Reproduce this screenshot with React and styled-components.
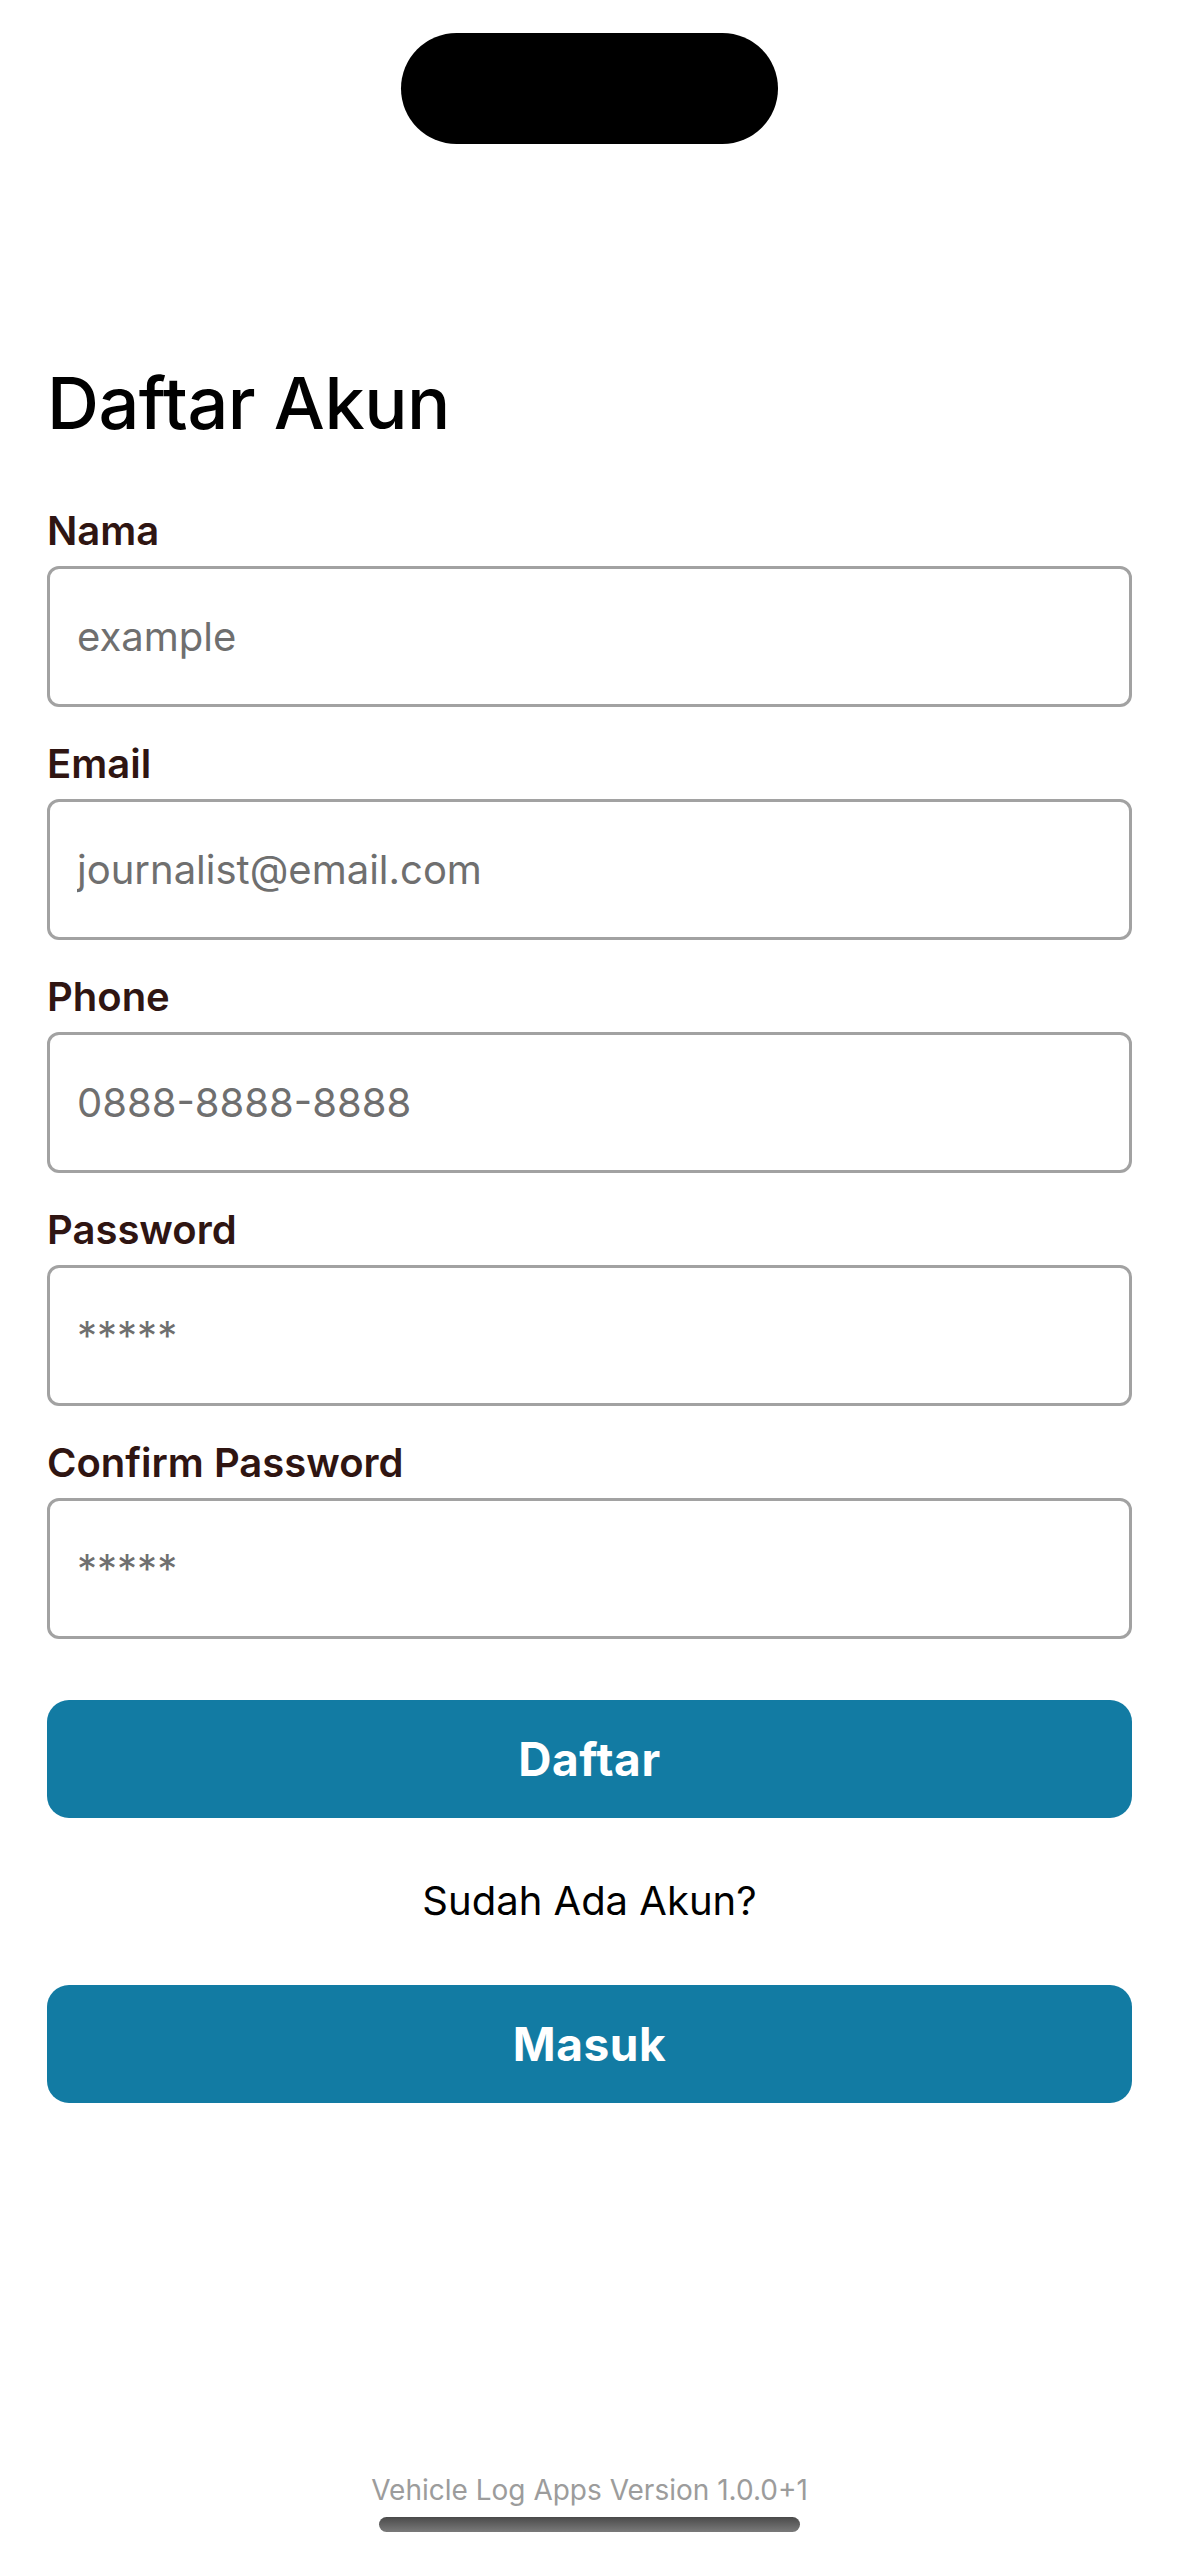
import React from 'react';
import styled, { createGlobalStyle } from 'styled-components';

const GlobalStyle = createGlobalStyle`
  html, body {
    margin: 0;
    padding: 0;
    background: #ffffff;
  }

  body {
    font-family: 'Inter', 'Liberation Sans', sans-serif;
  }

  * {
    box-sizing: border-box;
  }
`;

const Screen = styled.div`
  display: flex;
  flex-direction: column;
  min-height: 2556px;
  background: #ffffff;
`;

const StatusBar = styled.div`
  display: flex;
  justify-content: center;
  padding-top: 33px;
`;

const Notch = styled.div`
  width: 377px;
  height: 111px;
  border-radius: 56px;
  background: #000000;
`;

const Content = styled.div`
  display: flex;
  flex-direction: column;
  padding: 0 47px;
`;

const Title = styled.h1`
  margin: 215px 0 0;
  font-size: 72px;
  line-height: 88px;
  font-weight: 500;
  color: #000000;
  letter-spacing: -0.5px;
`;

const Form = styled.div`
  display: flex;
  flex-direction: column;
  gap: 37px;
  margin-top: 64px;
`;

const Field = styled.div`
  display: flex;
  flex-direction: column;
  gap: 15px;
`;

const Label = styled.label`
  font-size: 40px;
  line-height: 40px;
  font-weight: 600;
  color: #2f1512;
`;

const Input = styled.input`
  width: 100%;
  height: 141px;
  padding: 0 27px;
  border: 3px solid #a2a2a2;
  border-radius: 12px;
  background: #ffffff;
  font-family: 'Inter', 'Liberation Sans', sans-serif;
  font-size: 40px;
  color: #222222;
  outline: none;

  &::placeholder {
    color: #6f6f6f;
  }
`;

const PrimaryButton = styled.button`
  width: 100%;
  height: 118px;
  margin-top: ${props => props.$top || 0}px;
  border: none;
  border-radius: 22px;
  background: #127ba3;
  color: #ffffff;
  font-family: 'Inter', 'Liberation Sans', sans-serif;
  font-size: 46px;
  font-weight: 700;
  letter-spacing: 0.6px;
  cursor: pointer;
`;

const Prompt = styled.div`
  margin: 59px 0 60px;
  font-size: 40px;
  line-height: 48px;
  text-align: center;
  color: #000000;
`;

const Footer = styled.div`
  display: flex;
  flex-direction: column;
  align-items: center;
  margin-top: auto;
  padding-bottom: 24px;
`;

const Version = styled.div`
  font-size: 28px;
  line-height: 32px;
  color: #9c9c9c;
`;

const HomeIndicator = styled.div`
  width: 421px;
  height: 15px;
  margin-top: 11px;
  border-radius: 8px;
  background: linear-gradient(180deg, #4a4a4a 0%, #7a7a7a 100%);
`;

const fields = [
  { label: 'Nama', placeholder: 'example', type: 'text' },
  { label: 'Email', placeholder: 'journalist@email.com', type: 'email' },
  { label: 'Phone', placeholder: '0888-8888-8888', type: 'tel' },
  { label: 'Password', placeholder: '*****', type: 'password' },
  { label: 'Confirm Password', placeholder: '*****', type: 'password' },
];

export default function App() {
  return (
    <>
      <GlobalStyle />
      <Screen>
        <StatusBar>
          <Notch />
        </StatusBar>

        <Content>
          <Title>Daftar Akun</Title>

          <Form>
            {fields.map(field => (
              <Field key={field.label}>
                <Label>{field.label}</Label>
                <Input type={field.type} placeholder={field.placeholder} />
              </Field>
            ))}
          </Form>

          <PrimaryButton $top={61}>Daftar</PrimaryButton>
          <Prompt>Sudah Ada Akun?</Prompt>
          <PrimaryButton>Masuk</PrimaryButton>
        </Content>

        <Footer>
          <Version>Vehicle Log Apps Version 1.0.0+1</Version>
          <HomeIndicator />
        </Footer>
      </Screen>
    </>
  );
}
